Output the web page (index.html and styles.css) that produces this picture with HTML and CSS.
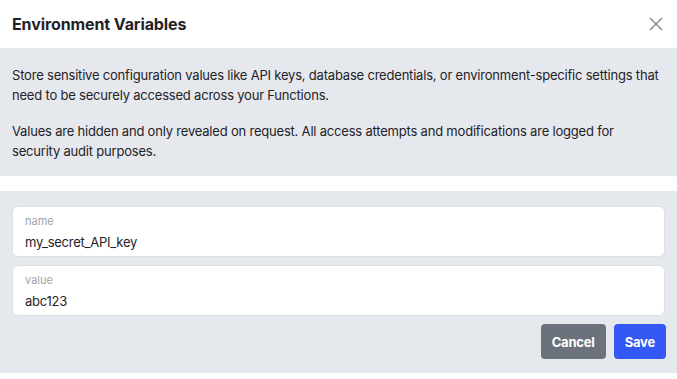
FILE: index.html
```html
<!DOCTYPE html>
<html lang="en">

<head>
    <meta charset="UTF-8">
    <meta name="viewport" content="width=device-width, initial-scale=1.0">
    <title>Environment Variables</title>
    <link rel="stylesheet" href="styles.css">
</head>

<body>
    <div class="dialog">
        <div class="dialog-header">
            <h2 class="dialog-title">Environment Variables</h2>
            <button class="close-btn" aria-label="Close">
                <svg width="14" height="14" viewBox="0 0 14 14">
                    <path d="M1 1 L13 13 M13 1 L1 13" stroke="#858585" stroke-width="1.4" fill="none" />
                </svg>
            </button>
        </div>

        <div class="intro">
            <p>Store sensitive configuration values like API keys, database credentials, or environment-specific settings that need to be securely accessed across your Functions.</p>
            <p>Values are hidden and only revealed on request. All access attempts and modifications are logged for<br>security audit purposes.</p>
        </div>

        <form class="var-form">
            <label class="field">
                <span class="field-label">name</span>
                <input type="text" class="field-input" value="my_secret_API_key">
            </label>
            <label class="field">
                <span class="field-label">value</span>
                <input type="text" class="field-input" value="abc123">
            </label>
            <div class="actions">
                <button type="button" class="btn btn-cancel">Cancel</button>
                <button type="submit" class="btn btn-save">Save</button>
            </div>
        </form>
    </div>
</body>

</html>
```

FILE: styles.css
```css
body {
    margin: 0;
    font-family: Inter, "Noto Sans", sans-serif;
    color: #1f2328;
    background: #fff;
}

.dialog-header {
    height: 48px;
    padding: 0 12px;
    display: flex;
    align-items: center;
    justify-content: space-between;
}

.dialog-title {
    margin: 0;
    font-size: 16px;
    font-weight: 700;
    letter-spacing: -0.1px;
    color: #1f2328;
}

.close-btn {
    border: none;
    background: none;
    padding: 0;
    width: 14px;
    height: 14px;
    margin-right: 2px;
    display: flex;
    cursor: pointer;
}

.intro {
    background: #e5e8ec;
    padding: 18px 12px 15px;
    font-size: 13px;
    line-height: 19.5px;
    letter-spacing: -0.2px;
    color: #1f2328;
}

.intro p {
    margin: 0;
}

.intro p + p {
    margin-top: 17px;
}

.var-form {
    margin-top: 15px;
    background: #e5e8ec;
    padding: 15px 12px 14px;
    display: flex;
    flex-direction: column;
    gap: 8px;
}

.field {
    display: flex;
    flex-direction: column;
    height: 51px;
    box-sizing: border-box;
    background: #fff;
    border: 1px solid #dcdfe3;
    border-radius: 6px;
    padding: 7px 12px 0;
}

.field-label {
    font-size: 11px;
    line-height: 14px;
    color: #a0a4a9;
}

.field-input {
    margin-top: 5px;
    border: none;
    outline: none;
    padding: 0;
    font-family: inherit;
    font-size: 13px;
    line-height: 18px;
    height: 18px;
    letter-spacing: -0.25px;
    color: #1f2328;
    background: transparent;
}

.actions {
    display: flex;
    justify-content: flex-end;
    gap: 8px;
    margin-right: -1px;
}

.btn {
    height: 35px;
    padding: 0 11px;
    border: none;
    border-radius: 4px;
    font-family: inherit;
    font-size: 13px;
    font-weight: 700;
    letter-spacing: -0.2px;
    color: #fff;
    cursor: pointer;
}

.btn-cancel {
    background: #6c727c;
}

.btn-save {
    background: #3358f4;
}
```
